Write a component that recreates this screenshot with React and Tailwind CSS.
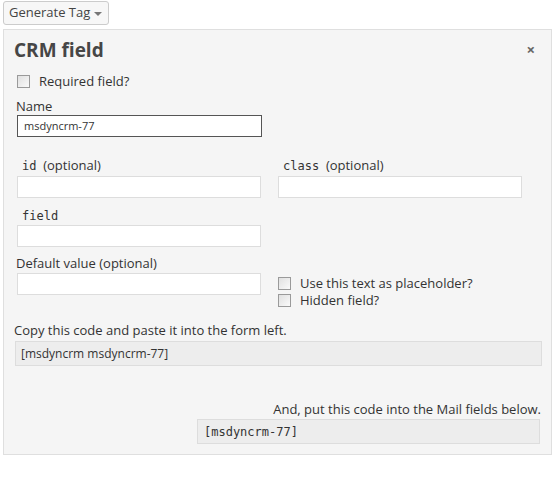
export default function App() {
  const mono = "font-['DejaVu_Sans_Mono',monospace] text-[12px]";
  const Check = ({ className = "" }) => (
    <span className={"block w-[13px] h-[13px] border border-[#9a9a9a] bg-gradient-to-br from-[#e0e0e0] to-[#fafafa] " + className} />
  );
  return (
    <div className="w-[559px] h-[484px] bg-white text-[#333] font-['Open_Sans',sans-serif] relative">
      <div className="pt-[1px] pl-[3px]">
        <div className="w-[106px] h-[24px] border border-[#cccccc] rounded-[3px] bg-[#f7f7f7] flex items-center pl-[5px] text-[13px] text-[#444]">
          <span>Generate Tag</span>
          <span className="ml-[4px] mt-[1px] w-0 h-0 border-l-[4px] border-r-[4px] border-t-[4px] border-l-transparent border-r-transparent border-t-[#777]" />
        </div>
      </div>
      <div className="ml-[3px] mt-[4px] w-[549px] h-[426px] border border-[#dfdfdf] bg-[#f5f5f5] relative">
        <div className="absolute top-[12px] right-[16px] text-[#666] text-[15px] font-bold leading-[14px]">×</div>
        <div className="pl-[10px] mt-[8px] h-[24px] text-[19px] leading-[24px] font-bold text-[#464646]">CRM field</div>
        <div className="mt-[11px] h-[16px] flex items-center pl-[13px]">
          <Check />
          <span className="ml-[9px] text-[13px] leading-[16px]">Required field?</span>
        </div>
        <div className="mt-[8px] pl-[12px] h-[18px] text-[13px] leading-[18px]">Name</div>
        <div className="pl-[13px]">
          <div className="w-[245px] h-[22px] border border-[#555] bg-white flex items-center pl-[6px] text-[11px] text-[#333]">msdyncrm-77</div>
        </div>
        <div className="grid grid-cols-[244px_244px] gap-x-[17px] pl-[13px] mt-[19px]">
          <div>
            <div className="h-[18px] leading-[18px] text-[13px] pl-[5px]"><span className={mono}>id</span>&nbsp; (optional)</div>
            <div className="mt-[2px] w-[244px] h-[22px] border border-[#dddddd] bg-white" />
            <div className="mt-[8px] h-[18px] leading-[18px] text-[13px] pl-[5px]"><span className={mono}>field</span></div>
            <div className="mt-[1px] w-[244px] h-[22px] border border-[#dddddd] bg-white" />
            <div className="mt-[7px] h-[18px] leading-[18px] text-[13px] -ml-[1px]">Default value (optional)</div>
            <div className="mt-[1px] w-[244px] h-[22px] border border-[#dddddd] bg-white" />
          </div>
          <div>
            <div className="h-[18px] leading-[18px] text-[13px] pl-[5px]"><span className={mono}>class</span>&nbsp; (optional)</div>
            <div className="mt-[2px] w-[244px] h-[22px] border border-[#dddddd] bg-white" />
            <div className="mt-[77px] h-[17px] flex items-center">
              <Check />
              <span className="ml-[9px] text-[13px] leading-[17px]">Use this text as placeholder?</span>
            </div>
            <div className="h-[17px] flex items-center">
              <Check />
              <span className="ml-[9px] text-[13px] leading-[17px]">Hidden field?</span>
            </div>
          </div>
        </div>
        <div className="mt-[12px] pl-[10px] h-[18px] leading-[18px] text-[13px]">Copy this code and paste it into the form left.</div>
        <div className="ml-[11px] mt-[2px] w-[527px] h-[25px] border border-[#dddddd] bg-[#ededed] flex items-center pl-[5px] text-[12px] text-[#333]">[msdyncrm msdyncrm-77]</div>
        <div className="mt-[34px] pr-[10px] h-[18px] leading-[18px] text-[13px] text-right">And, put this code into the Mail fields below.</div>
        <div className="ml-[193px] mt-[1px] w-[343px] h-[25px] border border-[#dddddd] bg-[#ededed] flex items-center pl-[6px] text-[#333]">
          <span className={mono}>[msdyncrm-77]</span>
        </div>
      </div>
    </div>
  );
}
